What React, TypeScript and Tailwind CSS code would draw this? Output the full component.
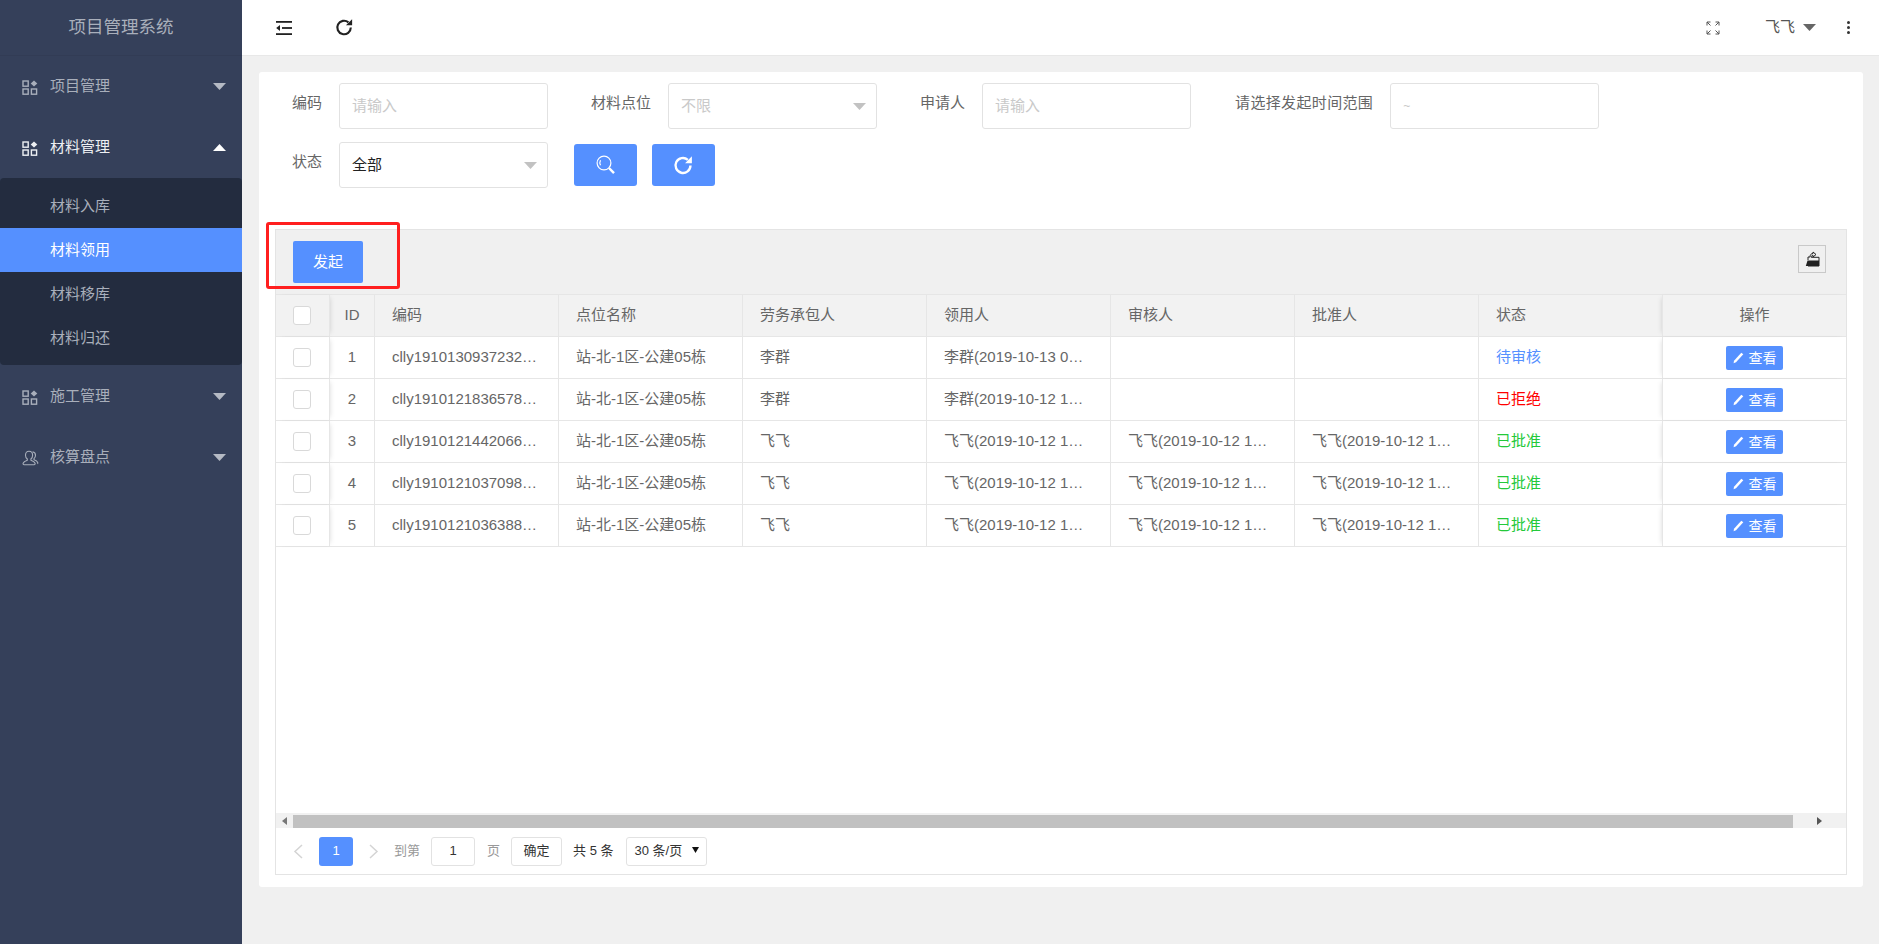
import React from 'react';

const BLUE = 'bg-[#5590ff]';

const GridIcon = () => (
  <svg width="16" height="15" viewBox="0 0 16 15" fill="none" stroke="currentColor" strokeWidth="1.4">
    <rect x="1" y="1" width="5.2" height="5.2" />
    <rect x="1" y="9" width="5.2" height="5.2" />
    <rect x="9.4" y="9" width="5.2" height="5.2" />
    <path d="M12 0.6 L15.3 3.6 L12 6.6 L8.7 3.6 Z" fill="currentColor" stroke="none" />
  </svg>
);

const UserIcon = () => (
  <svg width="17" height="17" viewBox="0 0 17 17" fill="none" stroke="currentColor" strokeWidth="1.1">
    <path d="M7 1.2c2.2 0 3.6 1.8 3.6 4 0 1.600-.7 3-1.700 3.800v1.200c2 .7 3.700 1.700 4.200 3.100.2.8-.2 1.400-1 1.400H2.100c-.8 0-1.200-.6-1-1.400.5-1.400 2.200-2.400 4.200-3.100V9C4.300 8.200 3.500 6.800 3.500 5.200c0-2.200 1.300-4 3.500-4z" />
    <path d="M10.500 1.700c1.900.3 3 1.800 3 3.600 0 1.400-.6 2.600-1.500 3.400v1c1.700.6 3.200 1.500 3.700 2.800.2.500.1 1-.2 1.300" />
  </svg>
);

const Caret = ({ up = false, className = '' }: { up?: boolean; className?: string }) => (
  <svg width="13" height="7" viewBox="0 0 13 7" className={className} fill="currentColor">
    <path d={up ? 'M0 7 L6.500 0 L13 7 Z' : 'M0 0 L13 0 L6.500 7 Z'} />
  </svg>
);

const Refresh = ({ size = 16, color = '#222' }: { size?: number; color?: string }) => (
  <svg width={size} height={size} viewBox="0 0 16 16" fill="none">
    <path d="M13.300 8a5.700 5.700 0 1 1-2-4.350" stroke={color} strokeWidth="1.800" />
    <path d="M14.400 1 L14.400 6.200 L9.200 6.200 Z" fill={color} />
  </svg>
);

const Outdent = () => (
  <svg width="18" height="16" viewBox="0 0 18 16" fill="#222">
    <rect x="1" y="1" width="16" height="1.800" />
    <rect x="7" y="7.100" width="10" height="1.800" />
    <rect x="1" y="13.200" width="16" height="1.800" />
    <path d="M5 5 L1.200 8 L5 11 Z" />
  </svg>
);

const Expand = () => (
  <svg width="14" height="14" viewBox="0 0 14 14" fill="none" stroke="#555" strokeWidth="1">
    <path d="M1 4.500V1h3.500M1 1l3.500 3.500M9.500 1H13v3.500M13 1L9.500 4.500M1 9.500V13h3.500M1 13l3.500-3.500M13 9.500V13H9.500M13 13L9.500 9.500" />
  </svg>
);

const SearchIcon = () => (
  <svg width="20" height="21" viewBox="0 0 20 21" fill="none" stroke="#fff" strokeWidth="1.200">
    <circle cx="8" cy="8" r="6.900" />
    <path d="M4.500 5.200c-.8 1.500-.8 3.500 0 5" />
    <path d="M13 13 L18 18.200" strokeWidth="2.400" />
  </svg>
);

const ExportIcon = () => (
  <svg width="15" height="16" viewBox="0 0 15 16">
    <path d="M3 9V6h2c0-2 1-3.500 3-3.500V1l3 2.500L8 6V4.300C7 4.300 6.200 5 6.200 6.300H14V15H3" fill="none" stroke="#222" strokeWidth="1" />
    <path d="M2.500 9.500H14V15H.8z" fill="#222" />
  </svg>
);

const Pen = () => (
  <svg width="11" height="12" viewBox="0 0 11 12" fill="#fff">
    <path d="M8.300.7 L10.300 2.300 L3 10.300 L.6 11.300 L1 8.700 Z" />
  </svg>
);

const Check = () => <div className="w-[18px] h-[19px] bg-white border border-[#d9d9d9] rounded-[3px]" />;

const MenuItem = ({ title, active = false, user = false }: { title: string; active?: boolean; user?: boolean }) => (
  <div className={`h-[61px] flex items-center pl-[22px] pr-[16px] text-[15px] ${active ? 'text-[#eef0f3]' : 'text-[#a9afbb]'}`}>
    <span className="w-[28px] flex pt-[2px]">{user ? <UserIcon /> : <GridIcon />}</span>
    <span className="flex-1">{title}</span>
    <Caret up={active} className={active ? 'text-white' : 'text-[#b5bac4]'} />
  </div>
);

const Sidebar = () => (
  <aside className="w-[242px] shrink-0 bg-[#35405a]">
    <div className="h-[56px] flex items-center justify-center text-[17.500px] text-[#a9afbb] border-b border-[#323c55]">项目管理系统</div>
    <MenuItem title="项目管理" />
    <MenuItem title="材料管理" active />
    <div className="bg-[#232c3f] rounded-[4px] pt-[6px] pb-[5px] mb-[1px] text-[15px] text-[#a9afbb]">
      {['材料入库', '材料领用', '材料移库', '材料归还'].map((s) => (
        <div key={s} className={`h-[44px] flex items-center pl-[50px] ${s === '材料领用' ? `${BLUE} text-white` : ''}`}>{s}</div>
      ))}
    </div>
    <MenuItem title="施工管理" />
    <MenuItem title="核算盘点" user />
  </aside>
);

const Field = ({ label, children, className = '', labelClass = '' }: { label: string; children: React.ReactNode; className?: string; labelClass?: string }) => (
  <div className={`flex items-center ${className}`}>
    <label className={`text-[15px] text-[#666] mr-[17px] pb-[5px] whitespace-nowrap ${labelClass}`}>{label}</label>
    {children}
  </div>
);

const Box = ({ text, muted = true, arrow = false, small = false }: { text: string; muted?: boolean; arrow?: boolean; small?: boolean }) => (
  <div className={`w-[209px] h-[46px] border border-[#e2e2e2] rounded-[3px] bg-white flex items-center pl-[12px] pr-[10px] ${small ? 'text-[12px]' : 'text-[15px]'} ${muted ? 'text-[#c9c9c9]' : 'text-[#222]'}`}>
    <span className="flex-1">{text}</span>
    {arrow && <Caret className="text-[#c2c2c2]" />}
  </div>
);

const Filters = () => (
  <div className="pl-[33px] pt-[11px]">
    <div className="flex">
      <Field label="编码" className="mr-[43px]"><Box text="请输入" /></Field>
      <Field label="材料点位" className="mr-[43px]"><Box text="不限" arrow /></Field>
      <Field label="申请人" className="mr-[44px]"><Box text="请输入" /></Field>
      <Field label="请选择发起时间范围" labelClass="tracking-[0.35px]"><Box text="~" small /></Field>
    </div>
    <div className="flex items-center mt-[13px]">
      <Field label="状态" className="mr-[26px]"><Box text="全部" muted={false} arrow /></Field>
      <button className={`w-[63px] h-[42px] ${BLUE} rounded-[3px] flex items-center justify-center mr-[15px]`}><SearchIcon /></button>
      <button className={`w-[63px] h-[42px] ${BLUE} rounded-[3px] flex items-center justify-center`}><Refresh size={21} color="#fff" /></button>
    </div>
  </div>
);

const cols = ['编码', '点位名称', '劳务承包人', '领用人', '审核人', '批准人'];

type Row = { id: number; code: string; who: string; use: string; audit: string; ok: string; status: string; color: string };

const rows: Row[] = [
  { id: 1, code: 'clly1910130937232…', who: '李群', use: '李群(2019-10-13 0…', audit: '', ok: '', status: '待审核', color: 'text-[#5590ff]' },
  { id: 2, code: 'clly1910121836578…', who: '李群', use: '李群(2019-10-12 1…', audit: '', ok: '', status: '已拒绝', color: 'text-[#ff0000]' },
  { id: 3, code: 'clly1910121442066…', who: '飞飞', use: '飞飞(2019-10-12 1…', audit: '飞飞(2019-10-12 1…', ok: '飞飞(2019-10-12 1…', status: '已批准', color: 'text-[#24c93a]' },
  { id: 4, code: 'clly1910121037098…', who: '飞飞', use: '飞飞(2019-10-12 1…', audit: '飞飞(2019-10-12 1…', ok: '飞飞(2019-10-12 1…', status: '已批准', color: 'text-[#24c93a]' },
  { id: 5, code: 'clly1910121036388…', who: '飞飞', use: '飞飞(2019-10-12 1…', audit: '飞飞(2019-10-12 1…', ok: '飞飞(2019-10-12 1…', status: '已批准', color: 'text-[#24c93a]' },
];

const cell = 'h-full shrink-0 flex items-center border-r border-[#e6e6e6] whitespace-nowrap';
const dataCell = `${cell} w-[184px] pl-[17px]`;
const leftCell = `${cell} w-[54px] pl-[17px] shadow-[3px_0_5px_-3px_rgba(0,0,0,0.15)]`;
const rightCell = 'h-full flex-1 flex items-center justify-center border-l border-[#e6e6e6] shadow-[-3px_0_5px_-3px_rgba(0,0,0,0.15)]';

const TableRow = ({ row }: { row: Row }) => {
  const vals = [row.code, '站-北-1区-公建05栋', row.who, row.use, row.audit, row.ok];
  return (
    <div className="h-[42px] flex border-b border-[#e6e6e6] text-[15px] text-[#666]">
      <div className={leftCell}><Check /></div>
      <div className={`${cell} w-[45px] justify-center`}>{row.id}</div>
      {vals.map((v, i) => (
        <div key={i} className={dataCell}>{v}</div>
      ))}
      <div className={`${cell} w-[183px] pl-[17px] border-r-0 ${row.color}`}>{row.status}</div>
      <div className={rightCell}>
        <button className={`w-[57px] h-[24px] ${BLUE} rounded-[2px] flex items-center justify-center gap-[5px] text-white text-[14px] mt-[1px]`}>
          <Pen />
          <span>查看</span>
        </button>
      </div>
    </div>
  );
};

const HeadRow = () => (
  <div className="h-[43px] flex bg-[#f2f2f2] border-y border-[#e6e6e6] text-[15px] text-[#666]">
    <div className={leftCell}><Check /></div>
    <div className={`${cell} w-[45px] justify-center`}>ID</div>
    {cols.map((c) => (
      <div key={c} className={dataCell}>{c}</div>
    ))}
    <div className={`${cell} w-[183px] pl-[17px] border-r-0`}>状态</div>
    <div className={rightCell}>操作</div>
  </div>
);

const Pager = () => {
  const box = 'h-[29px] border border-[#e2e2e2] rounded-[3px] bg-white flex items-center justify-center';
  return (
    <div className="h-[46px] flex items-center pl-[17px] text-[13px] text-[#333]">
      <svg width="10" height="15" viewBox="0 0 10 15" fill="none" stroke="#d4d4d4" strokeWidth="1.500"><path d="M9 1L2 7.500 9 14" /></svg>
      <div className={`w-[34px] h-[29px] ml-[16px] rounded-[3px] ${BLUE} text-white flex items-center justify-center`}>1</div>
      <svg width="10" height="15" viewBox="0 0 10 15" fill="none" stroke="#d4d4d4" strokeWidth="1.500" className="ml-[16px]"><path d="M1 1l7 6.500L1 14" /></svg>
      <span className="ml-[15px] text-[#999]">到第</span>
      <div className={`${box} w-[44px] ml-[11px]`}>1</div>
      <span className="ml-[12px] text-[#999]">页</span>
      <div className={`${box} w-[51px] ml-[11px]`}>确定</div>
      <span className="ml-[11px]">共 5 条</span>
      <div className={`${box} w-[81px] ml-[12px] !justify-start pl-[8px]`}>
        <span>30 条/页</span>
        <svg width="7" height="6" viewBox="0 0 7 6" className="ml-[10px] mb-[2px]"><path d="M0 0h7L3.500 6z" fill="#111" /></svg>
      </div>
    </div>
  );
};

const TableBlock = () => (
  <div className="relative mx-[16px] mt-[41px] border border-[#e4e4e4] h-[646px] flex flex-col">
    <div className="absolute left-[-10px] top-[-8px] w-[134px] h-[67px] border-[3px] border-[#ff1f1f] rounded-[3px]" />
    <div className="h-[64px] shrink-0 bg-[#f0f0f0] flex items-center justify-between pl-[17px] pr-[20px]">
      <button className={`w-[70px] h-[42px] ${BLUE} rounded-[2px] text-white text-[15px]`}>发起</button>
      <div className="w-[28px] h-[28px] mb-[6px] border border-[#c9c9c9] flex items-center justify-center"><ExportIcon /></div>
    </div>
    <HeadRow />
    {rows.map((r) => <TableRow key={r.id} row={r} />)}
    <div className="flex-1" />
    <div className="h-[15px] shrink-0 bg-[#f1f1f1] flex items-center">
      <div className="w-[17px] flex justify-center">
        <svg width="5" height="8" viewBox="0 0 5 8"><path d="M5 0v8L0 4z" fill="#777" /></svg>
      </div>
      <div className="w-[1500px] h-[13px] mt-[2px] bg-[#c1c1c1]" />
      <div className="flex-1 flex justify-center">
        <svg width="5" height="8" viewBox="0 0 5 8"><path d="M0 0v8l5-4z" fill="#555" /></svg>
      </div>
    </div>
    <Pager />
  </div>
);

export default function App() {
  return (
    <div className="w-[1879px] h-[944px] flex overflow-hidden bg-[#f0f0f0] font-['Liberation_Sans','Noto_Sans_CJK_SC',sans-serif]">
      <Sidebar />
      <div className="flex-1 flex flex-col min-w-0">
        <div className="h-[56px] shrink-0 bg-white border-b border-[#e8e8e8] flex items-center pl-[33px] pr-[29px]">
          <div className="flex items-center gap-[42px]">
            <Outdent />
            <Refresh size={19} />
          </div>
          <div className="ml-auto flex items-center text-[15px] text-[#555]">
            <Expand />
            <span className="ml-[45px] mr-[8px]">飞飞</span>
            <Caret className="text-[#666]" />
            <div className="ml-[31px] flex flex-col gap-[2px]">
              <span className="w-[3px] h-[3px] rounded-full bg-[#333]" />
              <span className="w-[3px] h-[3px] rounded-full bg-[#333]" />
              <span className="w-[3px] h-[3px] rounded-full bg-[#333]" />
            </div>
          </div>
        </div>
        <main className="ml-[17px] mr-[16px] mt-[16px] bg-white rounded-[3px] h-[815px] shrink-0">
          <Filters />
          <TableBlock />
        </main>
      </div>
    </div>
  );
}
